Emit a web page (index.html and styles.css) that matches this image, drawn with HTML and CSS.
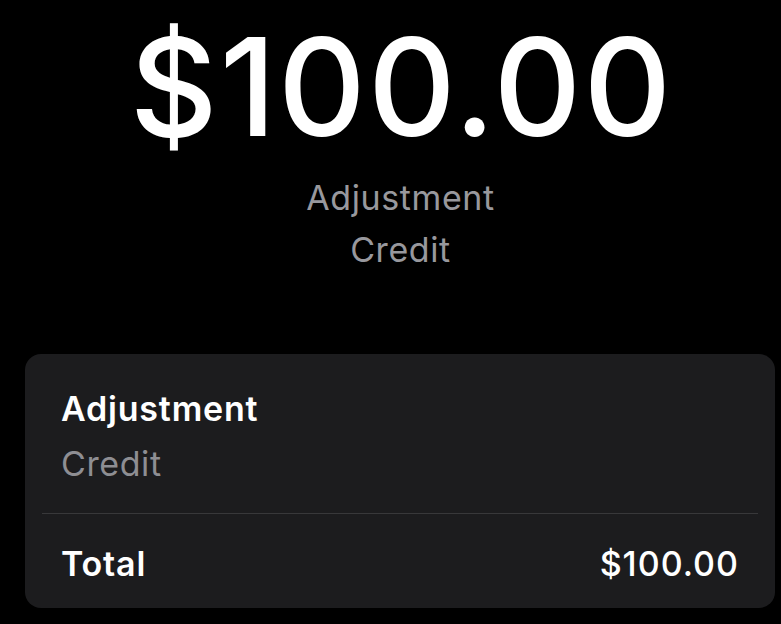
FILE: index.html
```html
<!DOCTYPE html>
<html>
<head>
<meta charset="utf-8">
<link rel="stylesheet" href="styles.css">
</head>
<body>
<main class="screen">
  <section class="hero">
    <div class="amount">$100.00</div>
    <div class="sub sub-first">Adjustment</div>
    <div class="sub">Credit</div>
  </section>
  <section class="card">
    <div class="row head">
      <div class="title">Adjustment</div>
      <div class="caption">Credit</div>
    </div>
    <div class="divider"></div>
    <div class="row total">
      <span class="label">Total</span>
      <span class="value">$100.00</span>
    </div>
  </section>
</main>
</body>
</html>
```
FILE: styles.css
```css
html, body {
  margin: 0;
  padding: 0;
  background: #000;
}
body {
  font-family: Inter, "Noto Sans", sans-serif;
  color: #fff;
}
.screen {
  width: 781px;
  height: 624px;
  overflow: hidden;
  display: flex;
  flex-direction: column;
}
.hero {
  display: flex;
  flex-direction: column;
  align-items: center;
  padding-top: 13px;
  padding-left: 20px;
  flex-shrink: 0;
}
.amount {
  font-size: 136px;
  font-weight: 500;
  line-height: 148px;
  margin-bottom: -8px;
  letter-spacing: 2px;
  padding-left: 2px;
}
.sub {
  font-size: 34px;
  line-height: 52px;
  color: #98989d;
  letter-spacing: 0.6px;
}
.sub-first {
  margin-top: 19px;
}
.card {
  margin: 78px 6px 0 25px;
  background: #1c1c1e;
  border-radius: 16px;
  padding: 0 17px;
  flex-shrink: 0;
}
.head {
  padding: 31px 19px 25px;
}
.title {
  font-size: 34px;
  font-weight: 600;
  line-height: 48px;
  letter-spacing: 0.8px;
}
.caption {
  font-size: 34px;
  color: #8e8e93;
  line-height: 48px;
  margin-top: 7px;
  letter-spacing: 0.6px;
}
.divider {
  height: 1px;
  background: #38383a;
}
.total {
  display: flex;
  justify-content: space-between;
  align-items: center;
  padding: 26px 19px 20px;
  font-size: 34px;
  line-height: 48px;
}
.label {
  font-weight: 600;
  letter-spacing: 0.8px;
}
.value {
  font-weight: 500;
  letter-spacing: 1px;
}
```
